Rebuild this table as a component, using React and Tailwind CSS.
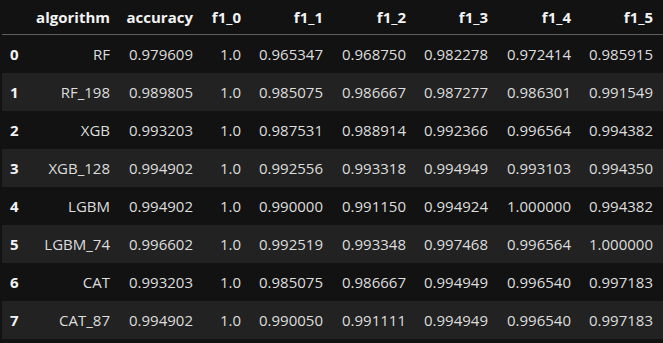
const columns = ['algorithm', 'accuracy', 'f1_0', 'f1_1', 'f1_2', 'f1_3', 'f1_4', 'f1_5'];

const rows = [
  ['RF', '0.979609', '1.0', '0.965347', '0.968750', '0.982278', '0.972414', '0.985915'],
  ['RF_198', '0.989805', '1.0', '0.985075', '0.986667', '0.987277', '0.986301', '0.991549'],
  ['XGB', '0.993203', '1.0', '0.987531', '0.988914', '0.992366', '0.996564', '0.994382'],
  ['XGB_128', '0.994902', '1.0', '0.992556', '0.993318', '0.994949', '0.993103', '0.994350'],
  ['LGBM', '0.994902', '1.0', '0.990000', '0.991150', '0.994924', '1.000000', '0.994382'],
  ['LGBM_74', '0.996602', '1.0', '0.992519', '0.993348', '0.997468', '0.996564', '1.000000'],
  ['CAT', '0.993203', '1.0', '0.985075', '0.986667', '0.994949', '0.996540', '0.997183'],
  ['CAT_87', '0.994902', '1.0', '0.990050', '0.991111', '0.994949', '0.996540', '0.997183'],
];

const grid = 'grid grid-cols-[22px_95px_83px_48px_82px_83px_82px_83px_82px]';

export default function App() {
  return (
    <div className="w-[663px] h-[343px] bg-[#121212] pl-[2px] font-['Open_Sans','Noto_Sans',sans-serif] text-[15px] text-[#dddddd] overflow-hidden">
      <div className={`${grid} h-[35px] items-center border-b border-[#616161] font-bold text-[#f3f3f3]`}>
        <div />
        {columns.map((c) => (
          <div key={c} className="text-right pr-[9px]">{c}</div>
        ))}
      </div>
      {rows.map((r, i) => (
        <div
          key={i}
          className={`${grid} h-[38px] items-center ${i % 2 === 1 ? 'bg-[#222222]' : ''}`}
        >
          <div className="pl-[8px] font-bold text-[#f3f3f3]">{i}</div>
          {r.map((v, j) => (
            <div key={j} className="text-right pr-[9px]">{v}</div>
          ))}
        </div>
      ))}
    </div>
  );
}
